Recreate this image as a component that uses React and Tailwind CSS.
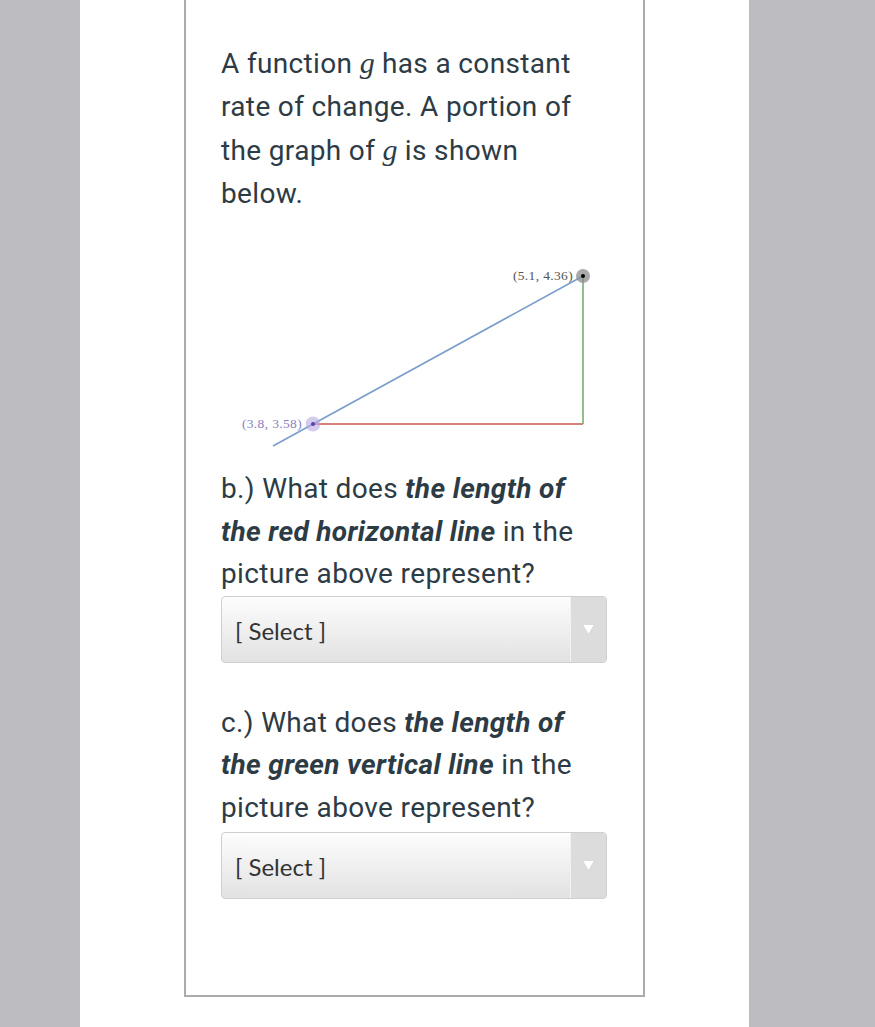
import React from "react";

// Math variable, set in a serif italic like the rendered equation
const G = () => (
  <span className="italic text-[30px] tracking-normal" style={{ fontFamily: '"Liberation Serif", serif' }}>
    g
  </span>
);

function Dropdown() {
  return (
    <div className="flex h-[67px] w-[386px] items-stretch overflow-hidden rounded-[4px] border border-[#cfcfcf] bg-gradient-to-b from-[#fdfdfd] to-[#e2e2e2] tracking-normal">
      <div
        className="flex flex-1 items-center pl-[13px] pt-[2px] text-[24px] text-[#333]"
        style={{ fontFamily: "Lato, sans-serif" }}
      >
        [ Select ]
      </div>
      <div className="flex w-[36px] items-center justify-center border-l border-[#f2f2f2] bg-[#dcdcdc]">
        <svg width="13" height="11" viewBox="0 0 13 11">
          <path d="M0.5 0.5 L12.5 0.5 L6.5 10.5 Z" fill="#ffffff" stroke="#cfcfcf" strokeWidth="0.6" />
        </svg>
      </div>
    </div>
  );
}

function Graph() {
  return (
    <svg width="386" height="220" viewBox="0 0 386 220" className="block">
      <line x1="92" y1="183" x2="362" y2="183" stroke="#c9574f" strokeWidth="1.6" />
      <line x1="362" y1="35" x2="362" y2="183" stroke="#79ad74" strokeWidth="1.6" />
      <line x1="52" y1="205" x2="362" y2="35" stroke="#7a9dcc" strokeWidth="1.6" />
      <circle cx="362" cy="35" r="7" fill="#8c8c8c" fillOpacity="0.75" />
      <circle cx="362" cy="35" r="2" fill="#000" />
      <circle cx="92" cy="183" r="7.5" fill="#b7a8e3" fillOpacity="0.6" />
      <circle cx="92" cy="183" r="2" fill="#5b3fb0" />
      <text
        x="352"
        y="39"
        textAnchor="end"
        fontSize="13.5"
        fill="#555"
        fontFamily='"Liberation Serif", serif'
      >
        (5.1, 4.36)
      </text>
      <text
        x="81"
        y="187"
        textAnchor="end"
        fontSize="13.5"
        fill="#8a7fc2"
        fontFamily='"Liberation Serif", serif'
      >
        (3.8, 3.58)
      </text>
    </svg>
  );
}

export default function App() {
  return (
    <div
      className="flex min-h-[1027px] bg-[#bdbcc1] pl-[80px]"
      style={{ fontFamily: "Roboto, sans-serif" }}
    >
      <div className="flex w-[669px] justify-center bg-white">
        <div className="mb-[30px] h-[997px] w-[461px] border-x-2 border-b-2 border-[#ababab] px-[35px] pt-[41px] text-[28px] leading-[43px] tracking-[0.35px] text-[#2d3b45]">
          <p className="max-w-[370px]">
            A function <G /> has a constant rate of change. A portion of the graph of <G /> is shown below.
          </p>

          <div className="mt-[26px]">
            <Graph />
          </div>

          <p className="mt-[7px] leading-[42.5px]">
            b.) What does <strong className="font-bold italic">the length of the red horizontal line</strong> in the picture above represent?
          </p>
          <Dropdown />

          <p className="mt-[39px] leading-[42.5px]">
            c.) What does <strong className="font-bold italic">the length of the green vertical line</strong> in the picture above represent?
          </p>
          <div className="mt-[3px]">
            <Dropdown />
          </div>
        </div>
      </div>
    </div>
  );
}
